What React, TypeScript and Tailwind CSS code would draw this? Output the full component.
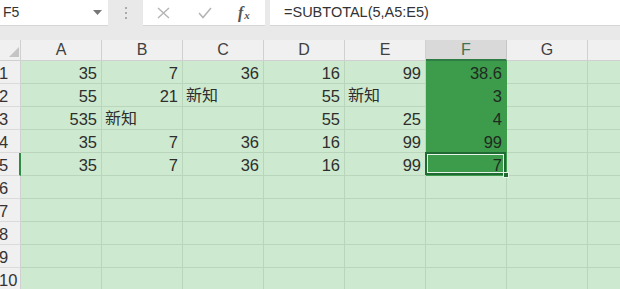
import React from "react";

type Cell = { v: string; left?: boolean };

const rows: Cell[][] = [
  [{ v: "35" }, { v: "7" }, { v: "36" }, { v: "16" }, { v: "99" }, { v: "38.6" }, { v: "" }, { v: "" }],
  [{ v: "55" }, { v: "21" }, { v: "新知", left: true }, { v: "55" }, { v: "新知", left: true }, { v: "3" }, { v: "" }, { v: "" }],
  [{ v: "535" }, { v: "新知", left: true }, { v: "" }, { v: "55" }, { v: "25" }, { v: "4" }, { v: "" }, { v: "" }],
  [{ v: "35" }, { v: "7" }, { v: "36" }, { v: "16" }, { v: "99" }, { v: "99" }, { v: "" }, { v: "" }],
  [{ v: "35" }, { v: "7" }, { v: "36" }, { v: "16" }, { v: "99" }, { v: "7" }, { v: "" }, { v: "" }],
];

const emptyRow: Cell[] = Array.from({ length: 8 }, () => ({ v: "" }));
const allRows: Cell[][] = [...rows, ...Array.from({ length: 5 }, () => emptyRow)];
const cols = ["A", "B", "C", "D", "E", "F", "G", ""];

export default function App() {
  return (
    <div className="w-[620px] h-[289px] overflow-hidden bg-[#e9e9e9] font-['Liberation_Sans',sans-serif] text-[#2e2e2e]">
      {/* formula bar */}
      <div className="flex h-[26px]">
        <div className="relative w-[108px] bg-white border-b border-[#d6d6d6] flex items-center pl-[3px] text-[14px] text-[#333]">
          F5
          <svg className="absolute right-[6px] top-[10px]" width="9" height="5" viewBox="0 0 9 5">
            <path d="M0 0 H9 L4.5 5 Z" fill="#777" />
          </svg>
        </div>
        <div className="w-[35px] flex flex-col items-center justify-center gap-[3px]">
          <div className="w-[2px] h-[2px] bg-[#aaa]" />
          <div className="w-[2px] h-[2px] bg-[#aaa]" />
          <div className="w-[2px] h-[2px] bg-[#aaa]" />
        </div>
        <div className="w-[122px] bg-white border-b border-[#d6d6d6] flex items-center pl-[14px]">
          <svg width="13" height="12" viewBox="0 0 13 12">
            <path d="M1 1 L12 11 M12 1 L1 11" stroke="#b4b4b4" strokeWidth="1.4" fill="none" />
          </svg>
          <svg className="ml-[28px]" width="14" height="12" viewBox="0 0 14 12">
            <path d="M1 6 L5 10.5 L13 1" stroke="#b4b4b4" strokeWidth="1.5" fill="none" />
          </svg>
          <div className="ml-[26px] font-['Liberation_Serif',serif] italic text-[#555] text-[16px] leading-none flex items-end">
            <span className="font-bold">f</span>
            <span className="text-[11px] font-bold ml-[1px]">x</span>
          </div>
        </div>
        <div className="w-[5px]" />
        <div className="flex-1 bg-white border-b border-[#d6d6d6] flex items-center pl-[14px] text-[14.5px] text-[#333]">
          =SUBTOTAL(5,A5:E5)
        </div>
      </div>
      <div className="h-[14px]" />

      {/* grid */}
      <div className="grid grid-cols-[21px_repeat(8,81px)] w-[669px]">
        {/* header row */}
        <div className="relative h-[21px] bg-[#f0f0f0] border-r border-b border-[#d0d0d0]">
          <svg className="absolute right-[1px] bottom-[3px]" width="10" height="10" viewBox="0 0 10 10">
            <path d="M10 0 V10 H0 Z" fill="#c4c4c4" />
          </svg>
        </div>
        {cols.map((c, i) =>
          c === "F" ? (
            <div
              key={i}
              className="h-[21px] bg-[#d9d9d9] border-r border-[#c6c6c6] border-b-2 border-b-[#2f7d44] flex items-center justify-center text-[16px] text-[#3d7450]"
            >
              {c}
            </div>
          ) : (
            <div
              key={i}
              className="h-[21px] bg-[#f0f0f0] border-r border-b border-[#d0d0d0] flex items-center justify-center text-[16px] text-[#404040]"
            >
              {c}
            </div>
          )
        )}

        {allRows.map((r, ri) => (
          <React.Fragment key={ri}>
            <div
              className={
                ri === 4
                  ? "h-[23px] bg-[#f0f0f0] border-r-2 border-r-[#2f8a46] border-b border-b-[#dadada] flex items-end text-[16.5px] leading-[20px] text-[#333] -ml-[1px]"
                  : "h-[23px] bg-[#f0f0f0] border-r border-r-[#d0d0d0] border-b border-b-[#dadada] flex items-end text-[16.5px] leading-[20px] text-[#333] -ml-[1px]"
              }
            >
              {ri + 1}
            </div>
            {r.map((cell, ci) => {
              const dark = ci === 5 && ri < 5;
              const active = ci === 5 && ri === 4;
              return (
                <div
                  key={ci}
                  className={
                    active
                      ? "relative z-10 h-[23px] bg-[#3d9b4c] border-r border-b border-[#3d9b4c] flex items-end justify-end pr-[4px] text-[16.5px] leading-[20px] text-[#1f2a20]"
                      : dark
                      ? "relative h-[23px] bg-[#3d9b4c] border-r border-b border-[#3d9b4c] flex items-end justify-end pr-[4px] text-[16.5px] leading-[20px] text-[#1f2a20]"
                      : cell.left
                      ? "relative h-[23px] bg-[#cde9cf] border-r border-b border-[#b9d5bc] flex items-end justify-start pl-[3px] text-[16px] leading-[20px] font-['Liberation_Sans','Noto_Sans_CJK_SC',sans-serif]"
                      : "relative h-[23px] bg-[#cde9cf] border-r border-b border-[#b9d5bc] flex items-end justify-end pr-[4px] text-[16.5px] leading-[20px]"
                  }
                >
                  {cell.v}
                  {active && (
                    <>
                      <div className="absolute -left-[1px] -top-[1px] right-0 bottom-0 border-2 border-[#1f6b33]">
                        <div className="w-full h-full border border-[#e8f3ea]" />
                      </div>
                      <div className="absolute -right-[3px] -bottom-[3px] w-[6px] h-[6px] bg-[#1f6b33] border border-[#e8f3ea]" />
                    </>
                  )}
                </div>
              );
            })}
          </React.Fragment>
        ))}
      </div>
    </div>
  );
}
